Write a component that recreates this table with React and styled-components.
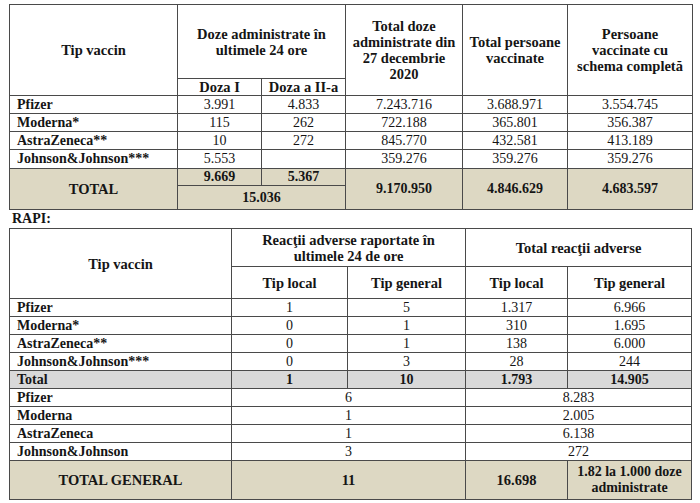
import React from "react";
import styled, { createGlobalStyle } from "styled-components";

const Global = createGlobalStyle`
  html, body { margin: 0; padding: 0; background: #fff; }
  body { font-family: "Liberation Serif", "Times New Roman", serif; color: #151515; }
`;

const Page = styled.div`
  display: flex;
  flex-direction: column;
  padding: 4px 0 0 9px;
  width: 683px;
`;

const Table = styled.table`
  border-collapse: collapse;
  table-layout: fixed;
  width: ${(p) => p.$w}px;
  font-size: 14px;
  line-height: 16px;
  border: 1px solid #3e3e3e;
`;

const Row = styled.tr`
  height: ${(p) => p.$h}px;
  background: ${(p) =>
    p.$tone === "beige" ? "#ddd8c3" : p.$tone === "grey" ? "#d9d9d9" : "#fff"};
`;

const Cell = styled.td`
  border: 1px solid #4a4a4a;
  padding: 0 ${(p) => (p.$left ? "7px" : "2px")};
  text-align: ${(p) => (p.$left ? "left" : "center")};
  font-weight: ${(p) => (p.$bold ? 700 : 400)};
  vertical-align: middle;
  white-space: nowrap;
`;

const Head = styled(Cell).attrs({ $bold: true })`
  font-size: ${(p) => (p.$big ? "14.5px" : "14px")};
`;

const Caption = styled.div`
  height: 18px;
  display: flex;
  align-items: center;
  padding-left: 3px;
  font-weight: 700;
  font-size: 14px;
`;

const t1Rows = [
  ["Pfizer", "3.991", "4.833", "7.243.716", "3.688.971", "3.554.745", 18],
  ["Moderna*", "115", "262", "722.188", "365.801", "356.387", 18],
  ["AstraZeneca**", "10", "272", "845.770", "432.581", "413.189", 18],
  ["Johnson&Johnson***", "5.553", "", "359.276", "359.276", "359.276", 19],
];

const t2Rows = [
  ["Pfizer", "1", "5", "1.317", "6.966"],
  ["Moderna*", "0", "1", "310", "1.695"],
  ["AstraZeneca**", "0", "1", "138", "6.000"],
  ["Johnson&Johnson***", "0", "3", "28", "244"],
];

const t2Totals = [
  ["Pfizer", "6", "8.283"],
  ["Moderna", "1", "2.005"],
  ["AstraZeneca", "1", "6.138"],
  ["Johnson&Johnson", "3", "272"],
];

export default function App() {
  return (
    <>
      <Global />
      <Page>
        <Table $w={683}>
          <colgroup>
            <col style={{ width: 168 }} />
            <col style={{ width: 84 }} />
            <col style={{ width: 84 }} />
            <col style={{ width: 117 }} />
            <col style={{ width: 105 }} />
            <col style={{ width: 125 }} />
          </colgroup>
          <tbody>
            <Row $h={74}>
              <Head $big rowSpan={2}>Tip vaccin</Head>
              <Head $big colSpan={2}>
                Doze administrate în
                <br />
                ultimele 24 ore
              </Head>
              <Head $big rowSpan={2}>
                Total doze
                <br />
                administrate din
                <br />
                27 decembrie
                <br />
                2020
              </Head>
              <Head $big rowSpan={2}>
                Total persoane
                <br />
                vaccinate
              </Head>
              <Head $big rowSpan={2}>
                Persoane
                <br />
                vaccinate cu
                <br />
                schema completă
              </Head>
            </Row>
            <Row $h={17}>
              <Head $big>Doza I</Head>
              <Head $big>Doza a II-a</Head>
            </Row>
            {t1Rows.map((r) => (
              <Row key={r[0]} $h={r[6]}>
                <Cell $left $bold>
                  {r[0]}
                </Cell>
                <Cell>{r[1]}</Cell>
                <Cell>{r[2]}</Cell>
                <Cell>{r[3]}</Cell>
                <Cell>{r[4]}</Cell>
                <Cell>{r[5]}</Cell>
              </Row>
            ))}
            <Row $h={17} $tone="beige">
              <Head $big rowSpan={2}>TOTAL</Head>
              <Head>9.669</Head>
              <Head>5.367</Head>
              <Head rowSpan={2}>9.170.950</Head>
              <Head rowSpan={2}>4.846.629</Head>
              <Head rowSpan={2}>4.683.597</Head>
            </Row>
            <Row $h={24} $tone="beige">
              <Head colSpan={2}>15.036</Head>
            </Row>
          </tbody>
        </Table>

        <Caption>RAPI:</Caption>

        <Table $w={682}>
          <colgroup>
            <col style={{ width: 222 }} />
            <col style={{ width: 116 }} />
            <col style={{ width: 118 }} />
            <col style={{ width: 102 }} />
            <col style={{ width: 124 }} />
          </colgroup>
          <tbody>
            <Row $h={38}>
              <Head $big rowSpan={2}>Tip vaccin</Head>
              <Head $big colSpan={2}>
                Reacţii adverse raportate în
                <br />
                ultimele 24 de ore
              </Head>
              <Head $big colSpan={2}>Total reacţii adverse</Head>
            </Row>
            <Row $h={32}>
              <Head $big>Tip local</Head>
              <Head $big>Tip general</Head>
              <Head $big>Tip local</Head>
              <Head $big>Tip general</Head>
            </Row>
            {t2Rows.map((r) => (
              <Row key={r[0]} $h={18}>
                <Cell $left $bold>
                  {r[0]}
                </Cell>
                <Cell>{r[1]}</Cell>
                <Cell>{r[2]}</Cell>
                <Cell>{r[3]}</Cell>
                <Cell>{r[4]}</Cell>
              </Row>
            ))}
            <Row $h={18} $tone="grey">
              <Cell $left $bold>
                Total
              </Cell>
              <Head>1</Head>
              <Head>10</Head>
              <Head>1.793</Head>
              <Head>14.905</Head>
            </Row>
            {t2Totals.map((r) => (
              <Row key={r[0]} $h={18}>
                <Cell $left $bold>
                  {r[0]}
                </Cell>
                <Cell colSpan={2}>{r[1]}</Cell>
                <Cell colSpan={2}>{r[2]}</Cell>
              </Row>
            ))}
            <Row $h={39} $tone="beige">
              <Head $big>TOTAL GENERAL</Head>
              <Head $big colSpan={2}>11</Head>
              <Head $big>16.698</Head>
              <Head>
                1.82 la 1.000 doze
                <br />
                administrate
              </Head>
            </Row>
          </tbody>
        </Table>
      </Page>
    </>
  );
}
